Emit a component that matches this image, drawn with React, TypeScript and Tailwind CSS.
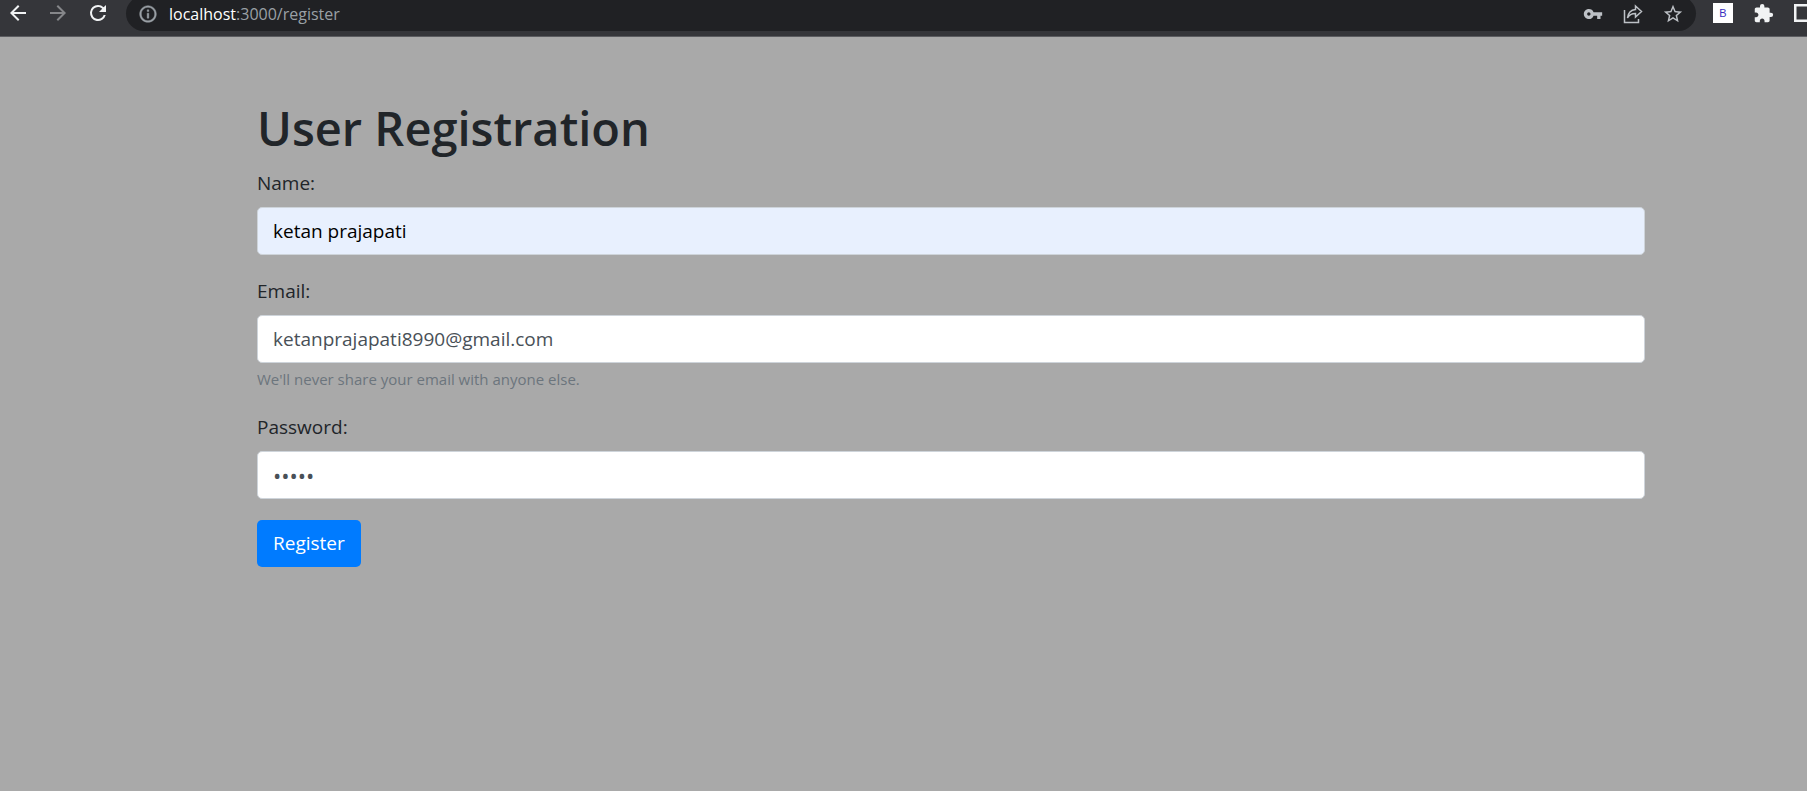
import type { ReactNode } from "react";

type IconProps = { d: string; label: string; className?: string; size?: string };

function ToolButton({ label, className = "", children }: { label: string; className?: string; children: ReactNode }) {
  return (
    <button type="button" aria-label={label} className={`flex size-10 shrink-0 items-center justify-center ${className}`}>
      {children}
    </button>
  );
}

function ToolIcon({ d, label, className = "", size = "size-6" }: IconProps) {
  return (
    <ToolButton label={label} className={className}>
      <svg viewBox="0 0 24 24" className={size} fill="currentColor" aria-hidden="true">
        <path d={d} />
      </svg>
    </ToolButton>
  );
}

const icons = {
  back: "M20 11H7.83l5.59-5.59L12 4l-8 8 8 8 1.41-1.41L7.83 13H20v-2z",
  forward: "M12 4l-1.41 1.41L16.17 11H4v2h12.17l-5.58 5.59L12 20l8-8z",
  reload:
    "M17.65 6.35A7.96 7.96 0 0 0 12 4a8 8 0 1 0 7.73 10h-2.08A6 6 0 1 1 12 6c1.66 0 3.14.69 4.22 1.78L13 11h7V4l-2.35 2.35z",
  info: "M11 17h2v-6h-2v6zm1-15C6.48 2 2 6.48 2 12s4.48 10 10 10 10-4.48 10-10S17.52 2 12 2zm0 18c-4.41 0-8-3.59-8-8s3.59-8 8-8 8 3.59 8 8-3.59 8-8 8zM11 9h2V7h-2v2z",
  key: "M12.65 10A5.99 5.99 0 0 0 7 6c-3.31 0-6 2.69-6 6s2.69 6 6 6a5.99 5.99 0 0 0 5.65-4H17v4h4v-4h2v-4H12.65zM7 14c-1.1 0-2-.9-2-2s.9-2 2-2 2 .9 2 2-.9 2-2 2z",
  star: "M22 9.24l-7.19-.62L12 2 9.19 8.63 2 9.24l5.46 4.73L5.82 21 12 17.27 18.18 21l-1.63-7.03L22 9.24zM12 15.4l-3.76 2.27 1-4.28-3.32-2.88 4.38-.38L12 6.1l1.71 4.04 4.38.38-3.32 2.88 1 4.28L12 15.4z",
  puzzle:
    "M20.5 11H19V7c0-1.1-.9-2-2-2h-4V3.5a2.5 2.5 0 0 0-5 0V5H4c-1.1 0-1.99.9-1.99 2v3.8H3.5c1.49 0 2.7 1.21 2.7 2.7s-1.21 2.7-2.7 2.7H2V20c0 1.1.9 2 2 2h3.8v-1.5c0-1.49 1.21-2.7 2.7-2.7s2.7 1.21 2.7 2.7V22H17c1.1 0 2-.9 2-2v-4h1.5a2.5 2.5 0 0 0 0-5z",
};

function BrowserBar() {
  return (
    <header className="flex h-[37px] items-end overflow-hidden border-b border-[#5b5c60] bg-[#35363a] pb-[3px]">
      <nav aria-label="History" className="flex pr-2 text-[#f1f3f4]">
        <ToolIcon d={icons.back} label="Back" className="-ml-0.5" />
        <ToolIcon d={icons.forward} label="Forward" className="text-[#86878a]" />
        <ToolIcon d={icons.reload} label="Reload" />
      </nav>
      <div className="mb-0.5 flex h-[35px] min-w-0 flex-1 items-center rounded-full bg-[#202124] pr-[3px] pl-3 text-[#bdc1c6]">
        <svg
          viewBox="0 0 24 24"
          className="size-5 shrink-0"
          fill="#9aa0a6"
          stroke="#9aa0a6"
          strokeWidth="0.5"
          aria-hidden="true"
        >
          <path d={icons.info} />
        </svg>
        <p className="min-w-0 flex-1 pl-[11px] text-[16px] leading-6 text-[#9aa0a6]">
          <span className="text-white">localhost</span>:3000/register
        </p>
        <ToolIcon d={icons.key} label="Saved passwords" size="size-5" />
        <ToolButton label="Share">
          <svg viewBox="0 0 20 20" className="size-5" fill="none" stroke="currentColor" strokeWidth="1.5" aria-hidden="true">
            <path d="M1.5 6v12.500h14V15" />
            <path d="M12.500 2l6 5.500-6 5.500v-3.500c-4 0-6.500 1.500-8 4.500.5-4.500 3-8 8-8.500z" />
          </svg>
        </ToolButton>
        <ToolIcon d={icons.star} label="Bookmark" size="size-[22px]" />
      </div>
      <div className="flex pl-[7px] text-[#f1f3f4]">
        <ToolButton label="Bootstrap extension">
          <span className="flex size-5 items-center justify-center bg-white font-['Liberation_Sans',sans-serif] text-[11px] text-[#3a2fc0]">
            B
          </span>
        </ToolButton>
        <ToolIcon d={icons.puzzle} label="Extensions" size="size-[21px]" />
        <div className="w-6 overflow-hidden">
          <ToolButton label="Side panel">
            <svg viewBox="0 0 18 18" className="size-[18px]" fill="none" stroke="currentColor" strokeWidth="2.5" aria-hidden="true">
              <path d="M1.25 1.25h15.500v15.500h-15.500z" />
            </svg>
          </ToolButton>
        </div>
      </div>
    </header>
  );
}

type FieldProps = {
  id: string;
  label: string;
  type: string;
  value: string;
  help?: string;
  className: string;
};

function Field({ id, label, type, value, help, className }: FieldProps) {
  return (
    <div className="mb-[21px] flex flex-col">
      <label htmlFor={id} className="mb-[9px] self-start leading-[30px]">
        {label}
      </label>
      <input
        id={id}
        type={type}
        defaultValue={value}
        aria-describedby={help ? `${id}-help` : undefined}
        className={`h-12 w-full rounded-[5px] border border-[#ced4da] px-[15px] ${className}`}
      />
      {help && (
        <small id={`${id}-help`} className="mt-1 text-[15px] leading-6 text-[#6c757d]">
          {help}
        </small>
      )}
    </div>
  );
}

export default function App() {
  return (
    <div className="flex min-h-screen flex-col bg-[#a9a9a9] font-['Open_Sans','Noto_Sans',sans-serif] text-[19px] text-[#212529]">
      <BrowserBar />
      <main className="pt-[61px] pr-[162px] pl-[257px]">
        <h1 className="mb-2.5 text-[47px] leading-[60px] font-semibold">User Registration</h1>
        <form onSubmit={(e) => e.preventDefault()}>
          <Field id="name" label="Name:" type="text" value="ketan prajapati" className="bg-[#e8f0fe] text-black" />
          <Field
            id="email"
            label="Email:"
            type="email"
            value="ketanprajapati8990@gmail.com"
            help="We'll never share your email with anyone else."
            className="bg-white text-[#495057]"
          />
          <Field id="password" label="Password:" type="password" value="admin" className="bg-white text-[22px] text-[#495057]" />
          <button type="submit" className="h-[47px] rounded-[5px] bg-[#007bff] px-4 text-white">
            Register
          </button>
        </form>
      </main>
    </div>
  );
}
